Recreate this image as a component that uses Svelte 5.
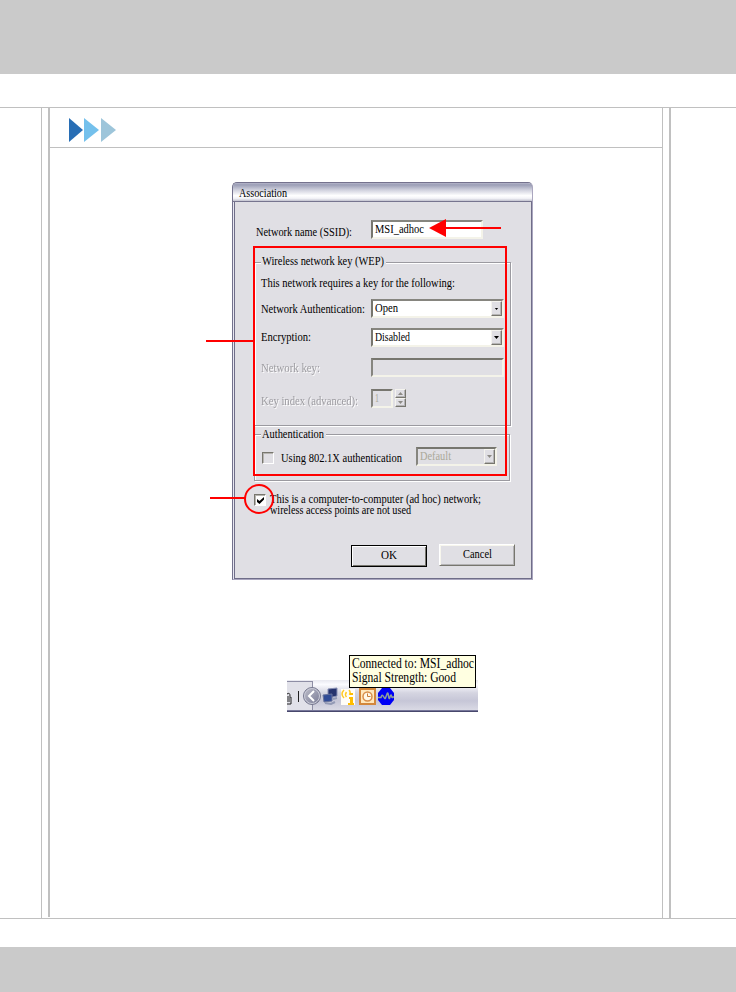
<script lang="ts">
  let ssid = "MSI_adhoc";
  let adhoc = true;
</script>

{#snippet label(text: string, width: number, kind = "")}
  <svg class="label {kind}" {width} height="14">
    <text x="0" y="11" textLength={width} lengthAdjust="spacingAndGlyphs">{text}</text>
  </svg>
{/snippet}

{#snippet arrow(up = false)}
  <svg class="arrow" width="5" height="3" viewBox="0 0 5 3">
    <path d={up ? "M0 3h5L2.5 0z" : "M0 0h5L2.5 3z"} />
  </svg>
{/snippet}

<div class="page">
  <header class="band top"></header>
  <main>
    <aside class="left"></aside>
    <section>
      <div class="heading">
        <svg width="48" height="24" viewBox="0 0 48 24">
          <path d="M0 0v24l14-12z" fill="#286eb5" />
          <path d="M15 0v24l15-12z" fill="#74c0ec" />
          <path d="M32 0v24l15-12z" fill="#9dc5da" />
        </svg>
      </div>

      <div class="dialog">
        <div class="titlebar">{@render label("Association", 48)}</div>
        <div class="body">
          <div class="row name">
            {@render label("Network name (SSID):", 96)}
            <div class="field ssid">{@render label(ssid, 49)}</div>
          </div>

          <div class="group wep">
            <div class="legend">{@render label("Wireless network key (WEP)", 122)}</div>
            <div class="intro">{@render label("This network requires a key for the following:", 194)}</div>
            <div class="row auth">
              {@render label("Network Authentication:", 104)}
              <div class="field">
                {@render label("Open", 23)}
                <span class="drop open">{@render arrow()}</span>
              </div>
            </div>
            <div class="row encryption">
              {@render label("Encryption:", 50)}
              <div class="field">
                {@render label("Disabled", 35)}
                <span class="drop">{@render arrow()}</span>
              </div>
            </div>
            <div class="row key">
              {@render label("Network key:", 59, "disabled")}
              <div class="field off"></div>
            </div>
            <div class="row index">
              {@render label("Key index (advanced):", 97, "disabled")}
              <div class="field off number">{@render label("1", 4, "dim")}</div>
              <div class="spin">
                <span>{@render arrow(true)}</span>
                <span>{@render arrow()}</span>
              </div>
            </div>
          </div>

          <div class="group eap">
            <div class="legend">{@render label("Authentication", 62)}</div>
            <div class="row">
              <span class="check off"></span>
              {@render label("Using 802.1X authentication", 121)}
              <div class="field off default">
                {@render label("Default", 31, "dim")}
                <span class="drop">{@render arrow()}</span>
              </div>
            </div>
          </div>

          <div class="row adhoc">
            <span class="check">
              {#if adhoc}
                <svg width="7" height="7" viewBox="0 0 7 7">
                  <path d="M0 2v3l2.5 2L7 2.5V0L2.5 4z" />
                </svg>
              {/if}
            </span>
            <div class="lines">
              {@render label("This is a computer-to-computer (ad hoc) network;", 211)}
              {@render label("wireless access points are not used", 141)}
            </div>
          </div>

          <div class="buttons">
            <div class="button ok">{@render label("OK", 16)}</div>
            <div class="button">{@render label("Cancel", 29)}</div>
          </div>
        </div>
      </div>

      <div class="tray">
        <div class="tooltip">
          {@render label("Connected to: MSI_adhoc", 122, "large")}
          {@render label("Signal Strength: Good", 104, "large")}
        </div>
        <svg class="taskbar" width="191" height="32" viewBox="0 0 191 32">
          <defs>
            <linearGradient id="bar" x2="0" y2="1">
              <stop offset="0" stop-color="#e8e8f0" />
              <stop offset=".14" stop-color="#fbfbff" />
              <stop offset=".4" stop-color="#d5d5e1" />
              <stop offset=".65" stop-color="#c6c6d7" />
              <stop offset="1" stop-color="#dedee8" />
            </linearGradient>
            <linearGradient id="knob" x2="1" y2="1">
              <stop offset="0" stop-color="#bfc0cc" />
              <stop offset="1" stop-color="#777994" />
            </linearGradient>
          </defs>
          <rect width="191" height="32" fill="url(#bar)" />
          <path d="M0 1h25v29H0z" fill="#e1e1e9" />
          <path d="M0 1.5h26M25.5 1v29" stroke="#8e8ea5" fill="none" />
          <path d="M0 30.5h191" stroke="#77779a" />
          <path d="M0 31.5h191" stroke="#48486d" />
          <path d="M0 14q3-2 3 2M-1 17h5v7h-5M0 19h3M0 21h3M11.5 11v11" fill="none" stroke="#222" />
          <circle cx="25" cy="16" r="8.5" fill="url(#knob)" stroke="#777990" />
          <circle cx="25" cy="16" r="7.5" fill="none" stroke="#c9cad7" />
          <path d="M27 11l-5 5 5 5" fill="none" stroke="#fff" stroke-width="2" />
          <path d="M41 9l9-1v8l-9 2z" fill="#26336e" stroke="#8990b4" />
          <path d="M36 15l9-1v7l-8 1z" fill="#304b96" stroke="#68739b" />
          <path d="M38 23l6 1 4-2M46 19l4-1" stroke="#939ab5" stroke-width="2" fill="none" />
          <rect x="54" y="9" width="14" height="16" fill="#fffdf8" />
          <path d="M57 10q-4 4 0 8M59.5 12q-2 2.500 0 5M62 10q2 2 .5 5" fill="none" stroke="#ffcb28" stroke-width="1.500" />
          <path d="M63 13h3v2h-3zM62 17h4v6h1v2h-6v-2h2v-4h-1z" fill="#ffbd00" />
          <rect x="73" y="9" width="15" height="15" fill="#ffe8bd" stroke="#d3873b" stroke-width="2" />
          <circle cx="80.5" cy="16.500" r="4.500" fill="#fff7e6" stroke="#d88e49" stroke-width="1.500" />
          <path d="M80.500 13.500v3h3" fill="none" stroke="#c77b36" />
          <path d="M95 8h8l4 5v7l-4 5h-8l-4-5v-7z" fill="#0000f5" />
          <path d="M91 17.500h3q1-4 2.500-1t2 1.500 1.500-4 1.500 2 1.500 1 1.500-1 1.500 1h1" fill="none" stroke="#8e9e99" stroke-width="1.500" />
        </svg>
      </div>
    </section>
    <aside class="right"></aside>
  </main>
  <footer class="band bottom"></footer>

  <!-- callouts -->
  <svg class="callouts" width="736" height="992" viewBox="0 0 736 992">
    <rect x="254" y="247" width="252" height="228" />
    <path d="M206 341h48M210 498h35M445 228h56" />
    <circle cx="259" cy="499" r="14" />
    <path class="head" d="M429 228l17-9v18z" />
  </svg>
</div>

<style>
  :global(body) {
    background: #fff;
    font-family: "Liberation Serif", "Times New Roman", serif;
  }

  .page {
    position: relative;
    display: flex;
    flex-direction: column;
    width: 736px;
    height: 992px;
    overflow: hidden;
  }

  .page * {
    box-sizing: border-box;
  }

  svg {
    display: block;
    flex: none;
  }

  .band {
    background: #cacaca;
  }

  .top {
    height: 74px;
    margin-bottom: 33px;
  }

  .bottom {
    height: 45px;
    margin-top: 28px;
  }

  main {
    display: grid;
    grid-template-columns: 50px 613px 73px;
    height: 812px;
    border-top: 1px solid #c0c0c0;
    border-bottom: 1px solid #c0c0c0;
  }

  .left {
    display: flex;
    height: 809px;
    border-right: 2px solid #c0c0c0;
  }

  .left::before {
    content: "";
    width: 41px;
    height: 810px;
    border-right: 1px solid #c0c0c0;
  }

  .right {
    margin-left: 6px;
    border-left: 2px solid #c0c0c0;
  }

  section {
    border-right: 1px solid #c0c0c0;
  }

  .heading {
    height: 40px;
    padding: 10px 0 0 19px;
    border-bottom: 1px solid #c0c0c0;
  }

  .label {
    overflow: visible;
    font-size: 12px;
    fill: #000;
  }

  .disabled {
    fill: #9d9ca1;
    filter: drop-shadow(1px 1px 0 #fff);
  }

  .dim {
    fill: #aaa899;
  }

  .large {
    font-size: 14px;
  }

  .dialog {
    width: 301px;
    height: 398px;
    margin: 34px 0 0 182px;
    border: 1px solid #74728d;
    border-right-color: #aaa6bf;
    border-bottom-color: #aaa6bf;
    border-radius: 5px 5px 0 0;
    background: #e0dfe4;
    box-shadow: inset 1px 0 #e8e8f2, inset 2px 0 #6f6d88, inset -1px -1px #6f6d88;
  }

  .titlebar {
    height: 19px;
    padding: 3px 0 0 6px;
    border-bottom: 1px solid #77758f;
    border-radius: 4px 4px 0 0;
    background: linear-gradient(#b5b6ca, #9b9eb6 10%, #d2d3df 40%, #fff 70%, #f4f4f8 85%, #c2c2cf);
  }

  .body {
    padding: 18px 0 0 21px;
  }

  .row {
    display: flex;
    align-items: flex-start;
  }

  .name {
    height: 42px;
    padding-left: 2px;
  }

  .name > .label {
    margin-top: 5px;
  }

  .field {
    display: flex;
    justify-content: space-between;
    width: 133px;
    height: 19px;
    padding: 0 0 0 2px;
    border: 2px solid;
    border-color: #86857f #f4f3e9 #f4f3e9 #77766e;
    background: #fff;
  }

  .off {
    border-color: #77766f #f4f3e9 #f4f3e9 #86857f;
    background: #e0dfe4;
  }

  .ssid {
    width: 112px;
    margin-left: 19px;
  }

  .drop,
  .spin span {
    display: flex;
    align-items: center;
    justify-content: center;
    width: 11px;
    height: 15px;
    border: 1px solid;
    border-color: #f5f4ef #77766e #77766e #f5f4ef;
    background: #e0dfe4;
    box-shadow: inset -1px -1px #b5b4b5;
  }

  .drop.open .arrow {
    height: 2px;
  }

  .off .arrow,
  .spin .arrow {
    fill: #8d8b86;
  }

  .group {
    border: 1px solid #9b9aa0;
    box-shadow: 1px 1px #fff, inset 1px 1px #fff;
  }

  .wep {
    width: 257px;
    height: 164px;
    padding-left: 6px;
  }

  .legend {
    width: fit-content;
    margin-top: -9px;
    padding: 0 2px 0 1px;
    background: #e0dfe4;
  }

  .intro {
    margin-top: 8px;
  }

  .wep .row {
    height: 30px;
  }

  .wep .row > .label {
    width: 110px;
  }

  .wep .auth {
    margin-top: 9px;
    height: 29px;
  }

  .auth > .label {
    margin-top: 3px;
  }

  .encryption > .label {
    margin-top: 2px;
  }

  .key > .label {
    margin-top: 3px;
  }

  .index > .label {
    margin-top: 6px;
  }

  .index .field {
    margin-top: 1px;
  }

  .number {
    width: 22px;
  }

  .spin {
    margin: 1px 0 0 2px;
  }

  .spin span {
    height: 9px;
  }

  .eap {
    width: 256px;
    height: 47px;
    margin: 8px 0 0;
    padding-left: 6px;
  }

  .eap .legend {
    margin-top: -8px;
  }

  .eap .row {
    padding: 6px 0 0 1px;
  }

  .check {
    width: 12px;
    height: 12px;
    padding: 2px;
    border: 1px solid;
    border-color: #77766e #fff #fff #77766e;
    background: #fff;
    box-shadow: inset 1px 1px #b6b4b0;
  }

  .check.off {
    margin-top: 5px;
    background: #e0dfe4;
  }

  .eap .row > .label {
    margin: 4px 14px 0 7px;
  }

  .default {
    width: 81px;
  }

  .adhoc {
    margin-top: 11px;
  }

  .adhoc .check {
    margin: 2px 4px 0 0;
  }

  .lines {
    height: 52px;
  }

  .lines .label + .label {
    margin-top: -3px;
  }

  .buttons {
    display: flex;
    gap: 12px;
    padding-left: 97px;
  }

  .button {
    display: flex;
    justify-content: center;
    width: 76px;
    height: 22px;
    padding-top: 2px;
    border: 1px solid;
    border-color: #fff #77766e #77766e #fff;
    box-shadow: inset 1px 1px #f7f6ed, inset -1px -1px #b3b2b4;
  }

  .ok {
    margin-top: 1px;
    border-color: #000;
    box-shadow: inset 1px 1px #fff, inset -1px -1px #77766e;
  }

  .tray {
    width: 191px;
    margin: 75px 0 0 237px;
  }

  .tooltip {
    position: relative;
    width: 127px;
    height: 33px;
    margin: 0 0 -8px 62px;
    padding: 1px 2px;
    border: 1px solid #000;
    background: #ffffe1;
  }

  .callouts {
    position: absolute;
    top: 0;
    left: 0;
    fill: none;
    stroke: #f00;
    stroke-width: 2;
    pointer-events: none;
  }

  .head {
    fill: #f00;
    stroke: none;
  }
</style>
